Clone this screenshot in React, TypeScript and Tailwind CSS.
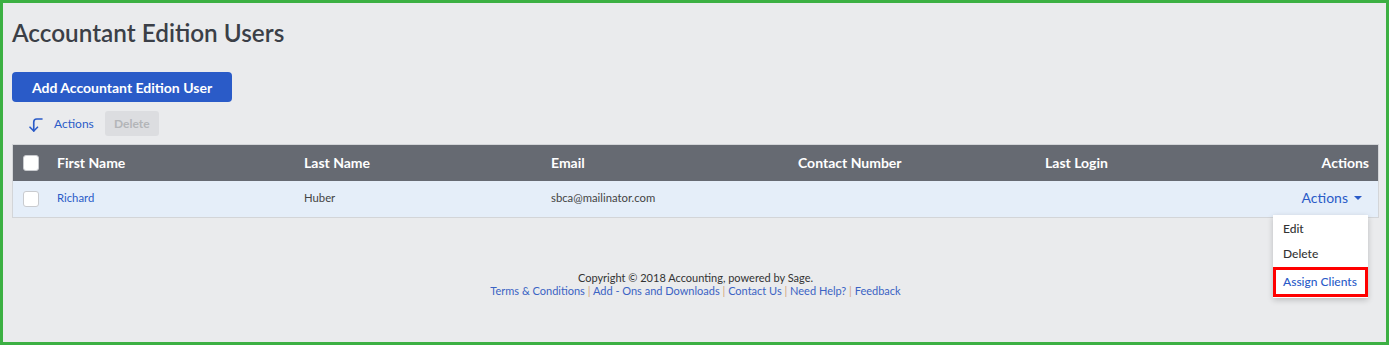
import React from "react";

const cols = ["First Name", "Last Name", "Email", "Contact Number", "Last Login"];

function ArrowIcon() {
  return (
    <svg width="18" height="18" viewBox="0 0 24 24" fill="none" stroke="currentColor" strokeWidth="2.2" strokeLinecap="round" strokeLinejoin="round">
      <path d="m14 15-5 5-5-5" />
      <path d="M20 4h-7a4 4 0 0 0-4 4v12" />
    </svg>
  );
}

const Box = () => (
  <span className="block w-[16px] h-[16px] rounded-[3px] bg-white border border-[#c9cbcf]" />
);

export default function App() {
  const links = ["Terms & Conditions", "Add - Ons and Downloads", "Contact Us", "Need Help?", "Feedback"];
  return (
    <div
      className="w-[1389px] h-[345px] bg-[#eaebed] border-[3px] border-[#3cb043] text-[#333] overflow-hidden"
      style={{ fontFamily: "Lato, 'Open Sans', sans-serif" }}
    >
      <div className="pl-[9px] pr-[7px] pt-[14px]">
        <h1 className="text-[24.3px] leading-[31px] font-semibold text-[#3b3f47]">Accountant Edition Users</h1>

        <button className="mt-[24px] h-[30px] w-[220px] rounded-[4px] bg-[#2a5bc8] text-white text-[14px] font-bold">
          Add Accountant Edition User
        </button>

        <div className="flex items-center mt-[9px] h-[25px]">
          <span className="ml-[15px] text-[#2a5bc8] mt-[3px]">
            <ArrowIcon />
          </span>
          <span className="ml-[9px] text-[12px] text-[#2a5bc8]">Actions</span>
          <span className="ml-[11px] h-[25px] w-[54px] rounded-[3px] bg-[#dcdde0] text-[#b3b5b8] text-[12px] font-bold flex items-center justify-center">
            Delete
          </span>
        </div>

        <div className="mt-[8px] border border-[#d3d5d8] relative">
          <div className="flex h-[36px] bg-[#666a72] text-white text-[14px] font-bold items-center pb-[2px]">
            <div className="w-[32px] pl-[10px] pt-[2px]">
              <Box />
            </div>
            {cols.map((c) => (
              <div key={c} className="w-[247px] pl-[12px]">
                {c}
              </div>
            ))}
            <div className="flex-1 text-right pr-[9px]">Actions</div>
          </div>
          <div className="flex h-[36px] bg-[#e5eef9] text-[11.3px] items-center">
            <div className="w-[32px] pl-[10px]">
              <Box />
            </div>
            <div className="w-[247px] pl-[12px] text-[#2a5bc8] -mt-[1px]">Richard</div>
            <div className="w-[247px] pl-[12px] text-[#444] -mt-[1px]">Huber</div>
            <div className="w-[247px] pl-[12px] text-[#444] -mt-[1px]">sbca@mailinator.com</div>
            <div className="w-[247px] pl-[12px]" />
            <div className="w-[247px] pl-[12px]" />
            <div className="flex-1 flex justify-end items-center pr-[16px] text-[#2a5bc8] text-[14px] -mt-[3px]">
              Actions
              <span className="ml-[6px] mt-[1px] w-0 h-0 border-l-[4px] border-r-[4px] border-t-[4px] border-l-transparent border-r-transparent border-t-[#2a5bc8]" />
            </div>
          </div>

          <div className="absolute right-[10px] top-[70px] w-[95px] bg-white shadow-[0_2px_6px_rgba(0,0,0,0.2)] text-[12px] font-medium pt-[2px] pb-[1px]">
            <div className="pl-[10px] h-[24px] leading-[24px] text-[#333]">Edit</div>
            <div className="pl-[10px] h-[26px] leading-[26px] text-[#333]">Delete</div>
            <div className="pl-[7px] h-[30px] leading-[24px] text-[#2a5bc8] border-[3px] border-[#ff0000]">Assign Clients</div>
          </div>
        </div>

        <div className="mt-[53px] text-center text-[11px] leading-[13px]">
          <div className="text-[#333]">Copyright © 2018 Accounting, powered by Sage.</div>
          <div>
            {links.map((l, i) => (
              <span key={l}>
                {i > 0 && <span className="text-[#d4a47c]"> | </span>}
                <span className="text-[#3b63c4]">{l}</span>
              </span>
            ))}
          </div>
        </div>
      </div>
    </div>
  );
}
